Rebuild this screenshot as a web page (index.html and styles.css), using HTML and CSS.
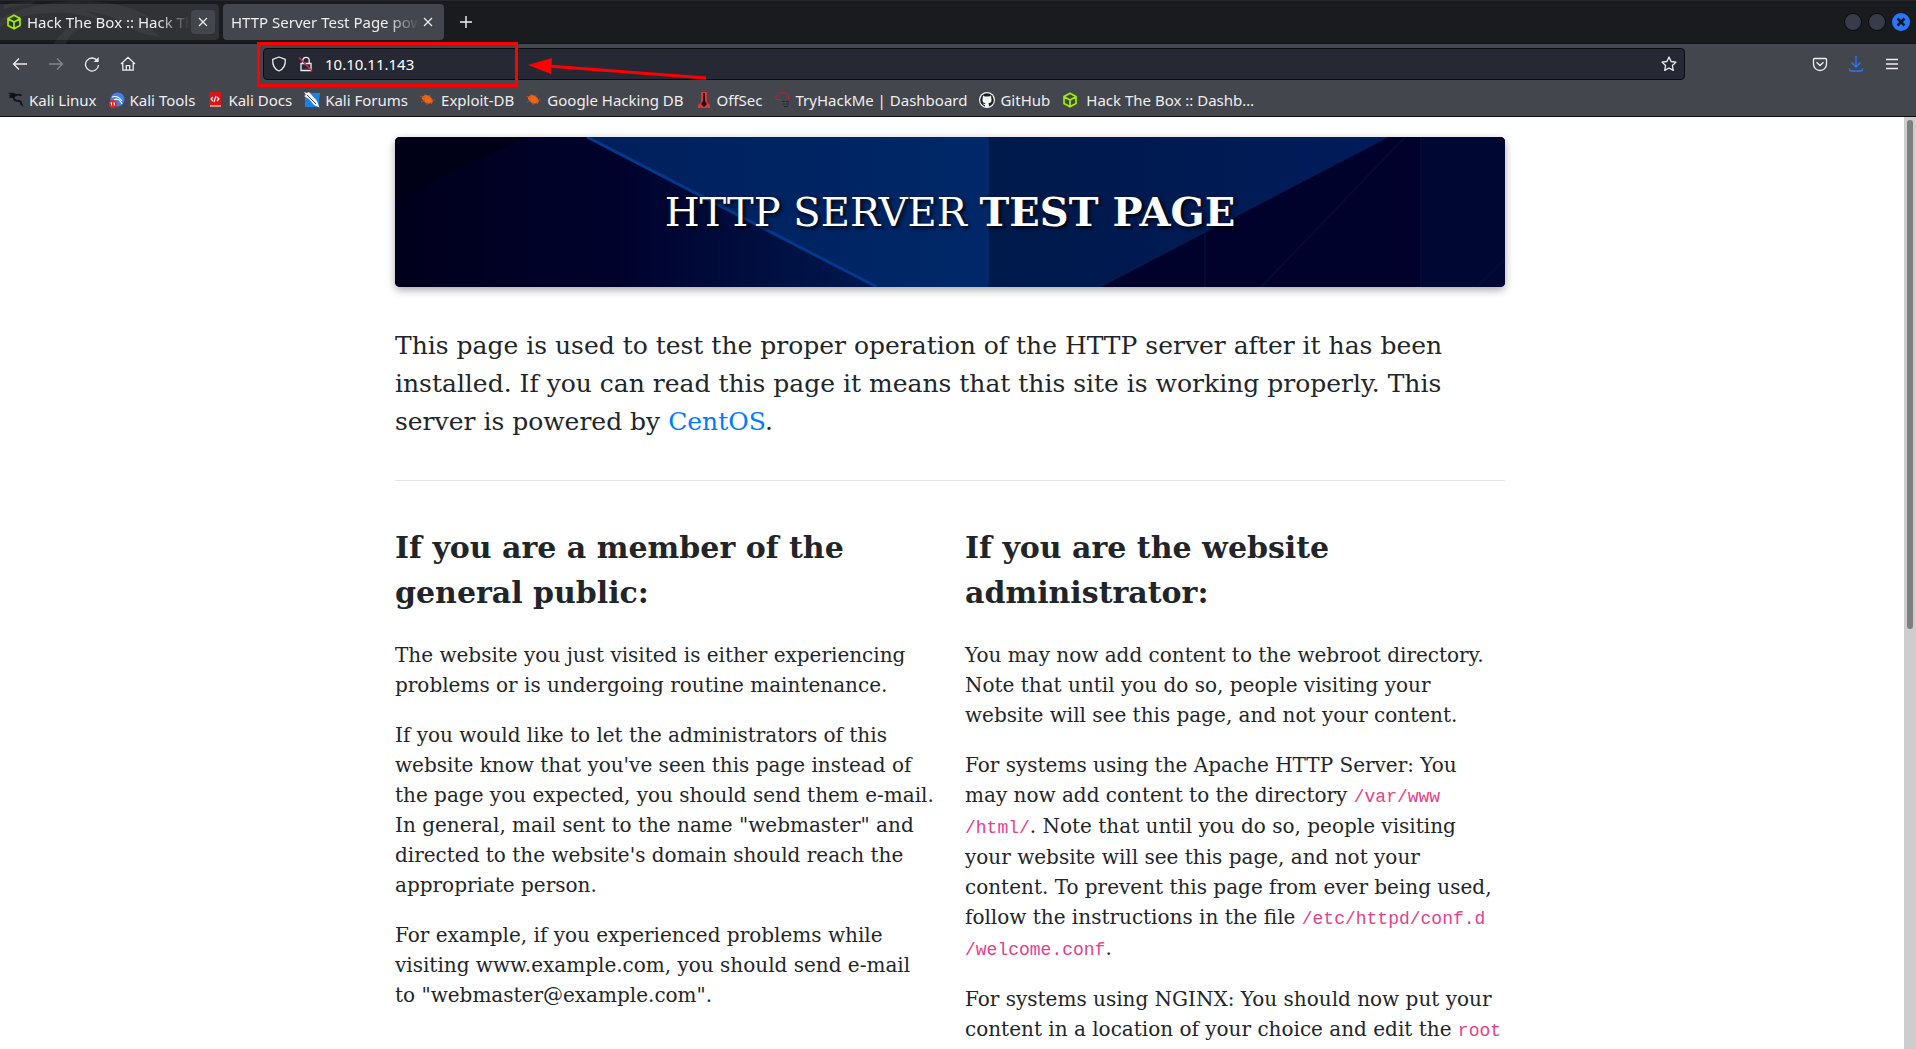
FILE: index.html
```html
<!DOCTYPE html>
<html lang="en">
<head>
<meta charset="utf-8">
<title>HTTP Server Test Page powered by CentOS</title>
<link rel="stylesheet" href="styles.css">
</head>
<body>
<div class="browser">
  <header class="chrome">
    <div class="tabbar">
      <svg class="dragon" viewBox="0 0 220 43" aria-hidden="true"><g fill="#2c2d31"><path d="M0 18C20 6 50 0 80 0C110 0 135 6 152 18L138 14C146 22 150 28 160 36L140 32C120 18 104 12 84 10C110 20 120 28 128 34C104 18 76 10 50 12C30 12 12 18 0 26Z"/><path d="M54 43C60 30 76 20 96 20L84 26C72 30 68 36 66 43Z"/><path d="M4 4C14 1 26 0 36 0L30 4Q16 4 4 8Z"/></g></svg>
      <div class="tab">
        <svg class="icon" viewBox="0 0 16 16"><path d="M8 1.2 14 4.5V11.500L8 14.800 2 11.500V4.500ZM2.500 5 8 8 13.500 5M8 8V14" fill="none" stroke="#9fef00" stroke-width="1.700" stroke-linejoin="round"/></svg>
        <span class="tab-title">Hack The Box :: Hack The Box</span>
        <button class="tab-close tab-close-hover" aria-label="Close tab"><svg viewBox="0 0 24 24"><path d="m8 8 8 8m0-8-8 8" stroke="#eee" stroke-width="1.200"/></svg></button>
      </div>
      <div class="tab tab-active">
        <span class="tab-title">HTTP Server Test Page powered by CentOS</span>
        <button class="tab-close" aria-label="Close tab"><svg viewBox="0 0 24 24"><path d="m8 8 8 8m0-8-8 8" stroke="#eee" stroke-width="1.200"/></svg></button>
      </div>
      <button class="new-tab" aria-label="New tab"><svg viewBox="0 0 16 16"><path d="M8 2v12M2 8h12" stroke="#f2f2f4" stroke-width="1.400"/></svg></button>
      <div class="window-buttons">
        <button class="win" aria-label="Minimize"></button>
        <button class="win" aria-label="Maximize"></button>
        <button class="win win-close" aria-label="Close"><svg viewBox="0 0 18 18"><path d="m5.500 5.500 7 7m0-7-7 7" stroke="#16181d" stroke-width="2.600"/></svg></button>
      </div>
    </div>

    <div class="navbar">
      <div class="nav-left">
        <button class="tool" aria-label="Back"><svg viewBox="0 0 16 16"><path d="M15 8H1.500M7 2.500 1.500 8 7 13.500"/></svg></button>
        <button class="tool tool-off" aria-label="Forward"><svg viewBox="0 0 16 16"><path d="M1 8h13.500M9 2.500 14.500 8 9 13.500"/></svg></button>
        <button class="tool" aria-label="Reload"><svg viewBox="0 0 16 16"><path d="M13.500 5A6.500 6.500 0 1 0 14.500 9"/><path d="M14.700 1v5H9.700Z" fill="#eee" stroke="none"/></svg></button>
        <button class="tool" aria-label="Home"><svg viewBox="0 0 16 16"><path d="M1 8 8 1.300 15 8M2.800 7v7.200H13.200V7M6.300 14V9.700H9.700V14"/></svg></button>
      </div>
      <div class="urlbar">
        <svg class="url-icon" viewBox="0 0 16 16"><path d="M8 1 14.300 3.300C14.600 9 12 13.500 8 15 4 13.500 1.400 9 1.700 3.300Z" stroke-linejoin="round"/></svg>
        <svg class="url-icon" viewBox="0 0 16 16"><path d="M3 7.500h10v7H3ZM4.800 7V4.500a3.200 3.200 0 0 1 6.400 0V7"/><path d="m1 1.500 13 13.500" stroke="#e22850" stroke-width="1.500"/></svg>
        <input class="url-input" type="text" value="10.10.11.143" aria-label="Address">
        <button class="tool" aria-label="Bookmark this page"><svg viewBox="0 0 16 16"><path d="m8 1 2.100 4.500 4.900.6-3.600 3.400.9 4.900L8 12l-4.300 2.400.9-4.900L1 6.100l4.900-.6Z" stroke-linejoin="round"/></svg></button>
        <div class="highlight"></div>
        <svg class="pointer" viewBox="0 0 180 24" aria-hidden="true"><path d="M20 8 178 20" stroke="#f00" stroke-width="3"/><path d="M0 7 24 0 23 16Z" fill="#f00"/></svg>
      </div>
      <div class="nav-right">
        <button class="tool" aria-label="Save to Pocket"><svg viewBox="0 0 16 16"><path d="M2.500 2.500h11q1 0 1 1V8a6.500 6.500 0 0 1-13 0V3.500q0-1 1-1ZM4.500 6.300 8 9.500l3.500-3.200"/></svg></button>
        <button class="tool tool-blue" aria-label="Downloads"><svg viewBox="0 0 16 16"><path d="M8 0V11M3.500 6.500 8 11l4.500-4.500M1.500 12.500V14q0 1 1 1h11q1 0 1-1V12.500"/></svg></button>
        <button class="tool" aria-label="Menu"><svg viewBox="0 0 16 16"><path d="M2 3.500h12M2 8h12M2 12.500h12"/></svg></button>
      </div>
    </div>

    <nav class="bookmarks">
      <a href="#"><svg class="icon" viewBox="0 0 16 16"><path d="M0 1Q5 0 8 2L13 2 14 4 10 3.500Q6 4 6.500 6.500 8 8 11 8 14 8.500 14 11L15.500 15 12.500 12.500Q12.500 10 10 9.800 5 9.500 4.800 6 3 5 1 7L2 4.500 0 4 3 3Z" fill="#101114"/></svg>Kali Linux</a>
      <a href="#"><svg class="icon" viewBox="0 0 16 16"><circle cx="8.500" cy="7.500" r="7" fill="#3b82f6"/><path d="M3 5Q9 3 13 9M5 8Q10 5 13 12" stroke="#fff" stroke-width="1.200" fill="none"/><circle cx="4" cy="12" r="4" fill="#e02828"/><path d="M2.500 10.500v3M5.300 10.500v3M1.500 11h1M4.300 11h1" stroke="#fff"/></svg>Kali Tools</a>
      <a href="#"><svg class="icon" viewBox="0 0 16 16"><path d="M2 0h12v15H4L2 14Z" fill="#d81515"/><path d="M3 14h11" stroke="#f3d8d8" stroke-width="1.200"/><path d="m6 5-2 2 2 2m4-4 2 2-2 2M9 4 7 10" stroke="#fff" fill="none" stroke-width="1.100"/></svg>Kali Docs</a>
      <a href="#"><svg class="icon" viewBox="0 0 16 16"><path d="M1 1h15L14.500 15H1Z" fill="#1683ee"/><path d="M0 0 3 1 5 0 13 9 15.500 15.500 10 13 5 7 0 4 2 3Z" fill="#f4f4f4"/><path d="m3 3 9 9" stroke="#444"/></svg>Kali Forums</a>
      <a href="#"><svg class="icon" viewBox="0 0 16 16"><path d="M2 5 5 3Q10 3 12 7L13 10 10 11.500Q5 12 4 9L2 7Z" fill="#ef6511"/><path d="M0 4 5 6M5 2v3M10 3 9 5M11 8h4M1 10 5 8M7 13V10M12 12 10 10" stroke="#c45720" stroke-width=".8"/></svg>Exploit-DB</a>
      <a href="#"><svg class="icon" viewBox="0 0 16 16"><path d="M2 5 5 3Q10 3 12 7L13 10 10 11.500Q5 12 4 9L2 7Z" fill="#ef6511"/><path d="M0 4 5 6M5 2v3M10 3 9 5M11 8h4M1 10 5 8M7 13V10M12 12 10 10" stroke="#c45720" stroke-width=".8"/></svg>Google Hacking DB</a>
      <a href="#"><svg class="icon" viewBox="0 0 16 16"><path d="M5 0h6v10l3 3v3H2v-3l3-3Z" fill="#e23232"/><path d="M7 1h2v8l2 3-3 3-3-3 2-3Z" fill="#1a1012"/></svg>OffSec</a>
      <a href="#"><svg class="icon" viewBox="0 0 16 16"><path d="M8 7.500H2Q0 5 3 4 4 0 8 1q2-1 4 0 2 1 2 3 3 2 0 3.500" fill="none" stroke="#d5151f"/><path d="M8 9.500h3m1 0h3M9 12h2m1 0h3M10 14.500h4" stroke="#26282c" stroke-width="1.200"/></svg>TryHackMe | Dashboard</a>
      <a href="#"><svg class="icon" viewBox="0 0 16 16"><circle cx="8" cy="8" r="8" fill="#f5f5f5"/><circle cx="8" cy="8" r="6.800" fill="#1b1f23"/><path d="M4 3.500 6 4.500h4L12 3.500l.3 2.500Q13.500 11 9.700 11L10 15H6V13Q4.500 13 4 11.500L6 12l.3-1Q2.500 11 3.700 6Z" fill="#f5f5f5"/></svg>GitHub</a>
      <a href="#" class="bm-wide"><svg class="icon" viewBox="0 0 16 16"><path d="M8 1.2 14 4.5V11.500L8 14.800 2 11.500V4.500ZM2.500 5 8 8 13.500 5M8 8V14" fill="none" stroke="#9fef00" stroke-width="1.700" stroke-linejoin="round"/></svg>Hack The Box :: Dashb…</a>
    </nav>
  </header>

  <div class="viewport">
    <main class="page">
      <div class="container">
        <div class="banner">
          <svg class="banner-art" viewBox="0 0 1110 150" preserveAspectRatio="none" aria-hidden="true">
            <defs>
              <linearGradient id="base" x1="0" x2="1"><stop offset="0" stop-color="#00001c"/><stop offset=".2" stop-color="#00022c"/><stop offset=".43" stop-color="#00184f"/></linearGradient>
              <linearGradient id="mid" x1="0" x2="1"><stop offset="0" stop-color="#001f5c"/><stop offset="1" stop-color="#002868"/></linearGradient>
              <linearGradient id="right" x1="0" x2="1"><stop offset="0" stop-color="#001a4c"/><stop offset="1" stop-color="#001b5a"/></linearGradient>
            </defs>
            <path d="M0 0H1110V150H0Z" fill="url(#base)"/>
            <path d="M0 0H130L0 62Z" fill="#000016"/>
            <path d="M192 0H594V150H484Z" fill="url(#mid)"/>
            <path d="M192 0 482 150" stroke="#04388a" stroke-width="3"/>
            <path d="M594 0H994L706 150H594Z" fill="url(#right)"/>
            <path d="M994 0H1110V150H706Z" fill="#00022c"/>
            <path d="M1026 0H1110V150H1026Z" fill="#000733"/>
            <path d="M810 96V150M1026 0V150M1010 0 866 150M1110 122 1082 150" stroke="#000c38" stroke-width="2" fill="none"/>
          </svg>
          <h1>HTTP SERVER <strong>TEST PAGE</strong></h1>
        </div>
        <p class="lead">This page is used to test the proper operation of the HTTP server after it has been installed. If you can read this page it means that this site is working properly. This server is powered by <a href="#">CentOS</a>.</p>
        <hr>
        <div class="columns">
          <section>
            <h2>If you are a member of the general public:</h2>
            <p>The website you just visited is either experiencing problems or is undergoing routine maintenance.</p>
            <p>If you would like to let the administrators of this website know that you've seen this page instead of the page you expected, you should send them e-mail. In general, mail sent to the name "webmaster" and directed to the website's domain should reach the appropriate person.</p>
            <p>For example, if you experienced problems while visiting www.example.com, you should send e-mail to "webmaster@example.com".</p>
          </section>
          <section>
            <h2>If you are the website administrator:</h2>
            <p>You may now add content to the webroot directory. Note that until you do so, people visiting your website will see this page, and not your content.</p>
            <p>For systems using the Apache HTTP Server: You may now add content to the directory <code>/var/www<wbr>/html/</code>. Note that until you do so, people visiting your website will see this page, and not your content. To prevent this page from ever being used, follow the instructions in the file <code>/etc/httpd/conf.d<wbr>/welcome.conf</code>.</p>
            <p>For systems using NGINX: You should now put your content in a location of your choice and edit the <code>root</code></p>
          </section>
        </div>
      </div>
    </main>
    <div class="scrollbar"><div class="thumb"></div></div>
  </div>
</div>
</body>
</html>
```
FILE: styles.css
```css
* { box-sizing: border-box; }

body {
  margin: 0;
  background: #fff;
  overflow: hidden;
}

button {
  border: 0;
  padding: 0;
  background: none;
  display: grid;
  place-items: center;
}

.browser {
  display: flex;
  flex-direction: column;
  height: 100vh;
}

/* Browser chrome */
.chrome {
  flex: none;
  background: #44464d;
  border-bottom: 1px solid #0c0d10;
  color: #eeeef0;
  font: 15px/24px "Noto Sans", sans-serif;
}

.tabbar {
  position: relative;
  display: flex;
  align-items: center;
  gap: 4px;
  height: 44px;
  background: #1a1b1f;
  border-top: 1px solid #26272c;
  border-bottom: 1px solid #101114;
}

.dragon {
  position: absolute;
  left: 0;
  top: 0;
  width: 220px;
  height: 43px;
  opacity: 0.6;
}

.tab {
  position: relative;
  display: flex;
  align-items: center;
  gap: 5px;
  width: 219px;
  height: 36px;
  padding: 0 4px 0 6px;
  border-radius: 0 4px 4px 0;
  background: #ffffff1a;
}

.tab-active {
  width: 221px;
  padding-left: 8px;
  border-radius: 4px;
  background: #44464d;
}

.tab-title {
  flex: 1;
  min-width: 0;
  overflow: hidden;
  white-space: nowrap;
  -webkit-mask-image: linear-gradient(to left, transparent, #000 32px);
  mask-image: linear-gradient(to left, transparent, #000 32px);
}

.tab-title { margin-right: -4px; }
.tab-active .tab-title { margin-right: -8px; }

.tab-close {
  width: 24px;
  height: 24px;
  border-radius: 4px;
}

.tab-close svg { width: 24px; height: 24px; }
.tab-close-hover { background: #44464d; }

.new-tab { margin-left: 10px; }
.new-tab svg { width: 16px; height: 16px; }

.window-buttons {
  display: flex;
  gap: 6px;
  margin-left: auto;
  padding-right: 6px;
}

.win {
  width: 18px;
  height: 18px;
  border: 1px solid #0a0b0d;
  border-radius: 50%;
  background: #383c4a;
}

.win-close { border: 0; background: #2777ff; }
.win-close svg { width: 18px; height: 18px; }

.icon { flex: none; width: 16px; height: 16px; }

.navbar {
  display: grid;
  grid-template-columns: 263px 1fr 231px;
  align-items: center;
  height: 40px;
}

.nav-left {
  display: flex;
  gap: 20px;
  padding-left: 12px;
}

.nav-right {
  display: flex;
  justify-content: flex-end;
  gap: 20px;
  padding-right: 16px;
}

.tool svg,
.url-icon {
  display: block;
  width: 16px;
  height: 16px;
  fill: none;
  stroke: #eeeef0;
  stroke-width: 1.3;
}

.tool-off svg { stroke: #85878c; }
.tool-blue svg { stroke: #2777ff; }

.urlbar {
  position: relative;
  display: flex;
  align-items: center;
  gap: 11px;
  height: 32px;
  padding: 0 7px;
  border: 1px solid #0c0d10;
  border-radius: 4px;
  background: #262833;
}

.url-input {
  flex: 1;
  min-width: 0;
  padding: 0;
  border: 0;
  outline: 0;
  background: none;
  color: #fff;
  font: 15px/24px "Noto Sans", sans-serif;
}

.highlight {
  position: absolute;
  left: -7px;
  top: -7px;
  width: 261px;
  height: 45px;
  border: 3px solid #f00;
}

.pointer {
  position: absolute;
  left: 264px;
  top: 9px;
  width: 180px;
  height: 24px;
}

.bookmarks {
  display: flex;
  gap: 12px;
  height: 32px;
  padding: 3px 8px;
}

.bookmarks a {
  display: flex;
  align-items: center;
  gap: 5px;
  color: inherit;
  text-decoration: none;
  white-space: nowrap;
}

.bookmarks .bm-wide { gap: 8px; }

/* Web page */
.viewport {
  flex: 1;
  min-height: 0;
  display: flex;
}

.page {
  flex: 1;
  min-width: 0;
  overflow: hidden;
  padding: 20px 4px 0 0;
  color: #212529;
  font: 20px/1.5 "DejaVu Serif", serif;
}

.container {
  max-width: 1110px;
  margin: 0 auto;
}

.banner {
  position: relative;
  display: grid;
  place-items: center;
  height: 150px;
  border-radius: 5px;
  background: #00022c;
  box-shadow: 0 3px 8px #00000059;
}

.banner-art {
  position: absolute;
  inset: 0;
  width: 100%;
  height: 100%;
  border-radius: 5px;
}

h1 {
  position: relative;
  margin: 0;
  color: #fff;
  font-size: 40px;
  font-weight: 400;
  line-height: 48px;
  text-shadow: 2px 2px 4px #000;
}

.lead {
  margin: 40px 0 39px;
  font-size: 25px;
  line-height: 38px;
}

.page a { color: #007bff; text-decoration: none; }

hr {
  margin: 0;
  border: 0;
  border-top: 1px solid #e5e5e5;
}

.columns {
  display: grid;
  grid-template-columns: 1fr 1fr;
  gap: 30px;
  padding-top: 44px;
}

h2 {
  margin: 0 0 25px;
  font-size: 30px;
  line-height: 45px;
}

.columns p { margin: 0 0 20px; }

/* The wider code face sets the line breaks around the file paths */
code {
  color: #e83e8c;
  font-family: "Liberation Mono", monospace;
  font-size: 18px;
}

.scrollbar {
  flex: none;
  width: 12px;
  padding: 3px;
  background: #cdcdcd;
}

.thumb {
  height: 55%;
  border-radius: 3px;
  background: #7b7f7f;
}
```
